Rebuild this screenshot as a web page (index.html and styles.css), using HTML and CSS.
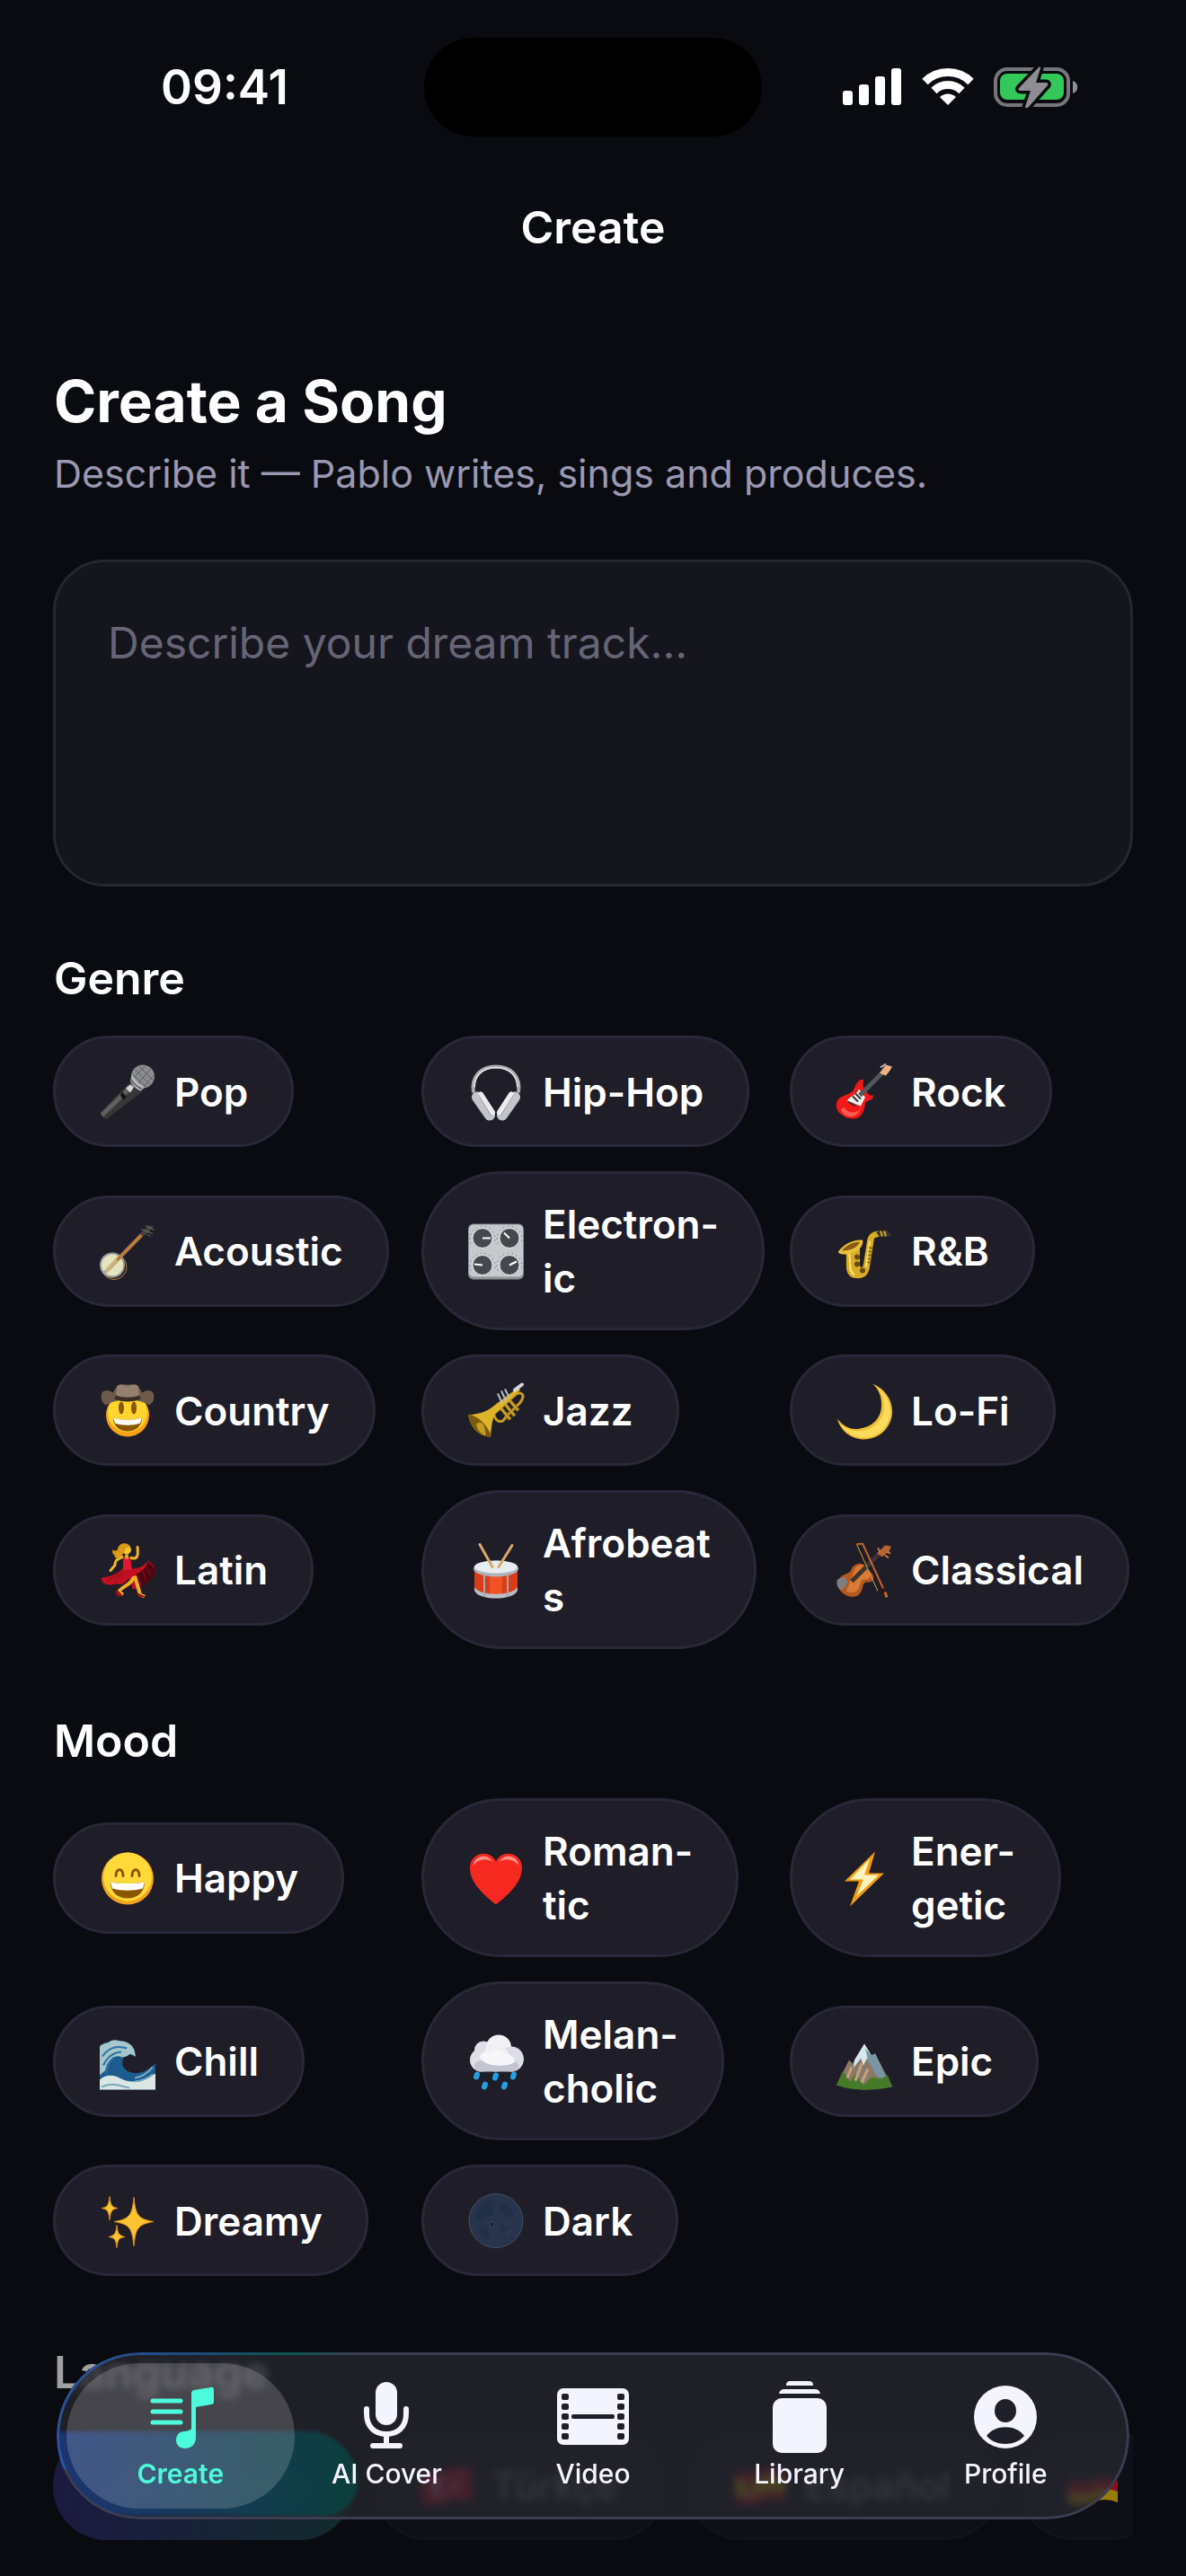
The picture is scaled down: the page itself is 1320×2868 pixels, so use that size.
FILE: index.html
```html
<!DOCTYPE html>
<html lang="en">

<head>
    <meta charset="UTF-8">
    <meta name="viewport" content="width=device-width, initial-scale=1">
    <title>Create</title>
    <link rel="stylesheet" href="styles.css">
</head>

<body>
    <div class="status">
        <span class="time">09:41</span>
        <div class="island"></div>
        <div class="status-icons">
            <svg width="66" height="44" viewBox="0 0 66 44" fill="#fff">
                <rect x="0" y="26" width="11" height="16" rx="3" />
                <rect x="18" y="19" width="11" height="23" rx="3" />
                <rect x="36" y="10" width="11" height="32" rx="3" />
                <rect x="54" y="1" width="11" height="41" rx="3" />
            </svg>
            <svg width="58" height="44" viewBox="0 0 58 44" fill="none" stroke="#fff" stroke-width="9">
                <path d="M3.500 16a36.500 36.500 0 0 1 51 0" />
                <path d="M13.500 26a22 22 0 0 1 31 0" />
                <path d="M29 42l-9-9a13 13 0 0 1 18 0z" fill="#fff" stroke="none" />
            </svg>
            <svg width="94" height="46" viewBox="0 0 94 46">
                <rect x="2" y="3" width="81" height="40" rx="13" fill="none" stroke="#77777b" stroke-width="4" />
                <path d="M88 16c7 2 7 12 0 14z" fill="#8e8e92" />
                <rect x="7" y="8" width="71" height="29" rx="8" fill="#34c759" />
                <path d="M50 1L28 24c-1 2 0 3 2 3h11l-6 18c0 2 2 2 3 1l22-25c1-2 0-3-2-3H47l5-16c0-2-1-2-2-1z" fill="#8e8e92" stroke="#0a0b10" stroke-width="7" paint-order="stroke" />
            </svg>
        </div>
    </div>

    <header class="title">Create</header>

    <main class="content">
        <h1>Create a Song</h1>
        <p class="sub">Describe it — Pablo writes, sings and produces.</p>
        <textarea class="prompt" aria-label="Song description" placeholder="Describe your dream track..."></textarea>

        <section>
            <h2>Genre</h2>
            <div class="grid">
                <button class="chip">
                    <svg viewBox="0 0 64 64">
                        <path d="M35 21l13 11L9 62c-3 1-8-4-7-7z" fill="#373737" />
                        <path d="M36 23l4 3L5 60l-3-4z" fill="#606060" />
                        <circle cx="49" cy="15" r="13" fill="#8b8d8f" />
                        <path d="M40 7l17 17M45 4l16 16M38 13l15 14M42 25L58 6M37 18L52 3M49 27l13-14" stroke="#5b5d60" stroke-width="1" />
                        <path d="M37 13c3 6 7 10 14 14l-4 4c-6-2-9-6-12-11z" fill="#b9bcc0" />
                        <path d="M36 18c2 5 6 8 12 11" fill="none" stroke="#66686b" stroke-width="2" />
                        <path d="M30 28l5-4 4 3-4 6z" fill="#d8d3d3" />
                        <path d="M26 32l5 6-4 3-3-5z" fill="#141414" />
                    </svg>
                    <span>Pop</span>
                </button>
                <button class="chip">
                    <svg viewBox="0 0 64 64">
                        <path d="M7 33C4 14 16 4 32 4s28 10 25 29" fill="none" stroke="#a9a9ab" stroke-width="4" />
                        <path d="M8 27C8 13 18 5 32 5s24 8 24 22" fill="none" stroke="#dedee0" stroke-width="2" />
                        <path d="M11 38l14 20M53 38L39 58" stroke="#c3c5ca" stroke-width="12" stroke-linecap="round" />
                        <path d="M15 35l13 20M49 35L36 55" stroke="#ececec" stroke-width="6" stroke-linecap="round" />
                        <path d="M12 35l15 24M52 35L37 59" stroke="#96999f" stroke-width="1" />
                    </svg>
                    <span>Hip-Hop</span>
                </button>
                <button class="chip">
                    <svg viewBox="0 0 64 64">
                        <path d="M24 22c3-5 8-4 7-1-2 5 2 9 6 14 2 3 6-1 5 2-1 6-8 4-9 8-1 8-4 17-13 17C8 62-1 53 1 45c1-7 8-8 14-11 6-2 6-8 9-12z" fill="#f31818" />
                        <path d="M9 49c5 8 16 8 19 0-1 13-19 14-22 3z" fill="#ff5a52" />
                        <path d="M26 29c3 4 4 6 7 9l-5 10-15-6c2-5 9-5 13-13z" fill="#eee" />
                        <path d="M19 37l6 6M22 34l6 6M14 43l8 5" stroke="#333" stroke-width="2" />
                        <path d="M27 36L52 11" stroke="#55565b" stroke-width="5" />
                        <path d="M49 11l7-9 7 2-3 5-4 5-3-1z" fill="#efb182" />
                        <path d="M50 5l6-4" stroke="#bbb" stroke-width="2" />
                    </svg>
                    <span>Rock</span>
                </button>
                <button class="chip">
                    <svg viewBox="0 0 64 64">
                        <circle cx="17" cy="49" r="14" fill="#2b221c" stroke="#b08442" stroke-width="1" />
                        <circle cx="15" cy="47" r="14" fill="#9c9ca4" />
                        <circle cx="15" cy="47" r="12" fill="#e3e5bf" />
                        <path d="M10 52L49 12" stroke="#b97c3e" stroke-width="4" />
                        <path d="M6 56l14-15" stroke="#c9b584" stroke-width="4" />
                        <path d="M46 12l9-9 6 1-7 8-6 3z" fill="#48423f" />
                        <path d="M47 7l13 5M52 3l10 5M54 13l4 2" stroke="#73706c" stroke-width="1" />
                        <circle cx="7" cy="55" r="2" fill="#a6acb5" />
                    </svg>
                    <span>Acoustic</span>
                </button>
                <button class="chip">
                    <svg viewBox="0 0 64 64">
                        <rect x="1" y="1" width="62" height="62" rx="6" fill="#8d9095" />
                        <rect x="2" y="2" width="60" height="58" rx="5" fill="#c6cacd" />
                        <g fill="#45494d" stroke="#eceeef" stroke-width="1">
                            <circle cx="17" cy="17" r="11" />
                            <circle cx="47" cy="17" r="11" />
                            <circle cx="17" cy="47" r="11" />
                            <circle cx="47" cy="47" r="11" />
                        </g>
                        <g fill="none" stroke="#55585c" stroke-width="1" stroke-dasharray="1 4">
                            <path d="M4 23a14 14 0 1 1 26 0M34 23a14 14 0 1 1 26 0M4 53a14 14 0 1 1 26 0M34 53a14 14 0 1 1 26 0" />
                        </g>
                        <path d="M17 17h9M47 17l-6-6M17 47l-9-1M47 47l8-4" stroke="#fff" stroke-width="2" />
                    </svg>
                    <span>Electron-<br>ic</span>
                </button>
                <button class="chip">
                    <svg viewBox="0 0 64 64">
                        <path d="M11 31c3 11-3 25 8 30 12 3 18-3 19-12l5-32 9-3-4-5c-8 0-12 5-13 11l-4 26c-1 5-4 5-4 0V22z" fill="#d9ad27" />
                        <path d="M15 34c2 8-1 20 6 24M38 20l-4 29" fill="none" stroke="#fbe577" stroke-width="2" />
                        <path d="M3 32c5-8 17-14 27-13 2 7-7 16-20 16-5 0-7-1-7-3z" fill="#e9c23c" />
                        <path d="M7 31c4-6 13-10 20-10-1 5-9 10-20 10z" fill="#8b5c10" />
                        <path d="M45 10l12-2 6 6-14 2z" fill="#3a372f" />
                        <path d="M50 9l2 6M54 9l2 6" stroke="#d9ad27" stroke-width="2" />
                        <g fill="#6b4a0b">
                            <circle cx="24" cy="38" r="3" />
                            <circle cx="24" cy="46" r="3" />
                            <circle cx="30" cy="53" r="3" />
                        </g>
                        <path d="M39 27l-2 20" stroke="#8b6a15" stroke-width="4" stroke-dasharray="2 2" />
                    </svg>
                    <span>R&amp;B</span>
                </button>
                <button class="chip">
                    <svg viewBox="0 0 64 64">
                        <circle cx="32" cy="37" r="24" fill="#f9a01b" />
                        <circle cx="32" cy="34" r="22" fill="#ffd52e" />
                        <path d="M3 13c3-5 8-4 13-1 3-8 8-9 11-9h10c3 0 8 1 11 9 5-3 10-4 13 1 1 6 0 10-5 13-12-8-36-8-48 0-5-3-6-7-5-13z" fill="#6e5a4b" />
                        <path d="M20 5c3-3 7-2 12 0 5-2 9-3 12 0l1 11c-8 3-18 3-26 0z" fill="#94806f" />
                        <path d="M19 15c8 3 18 3 26 0l2 4c-9 4-21 4-30 0z" fill="#3a2f27" />
                        <ellipse cx="25" cy="29" rx="3" ry="7" fill="#8a5700" />
                        <ellipse cx="39" cy="29" rx="3" ry="7" fill="#8a5700" />
                        <path d="M16 40c10 3 22 3 32 0 0 9-7 15-16 15s-16-6-16-15z" fill="#8a5700" />
                        <path d="M16 40c10 3 22 3 32 0l-2 6c-9 3-19 3-28 0z" fill="#fff" />
                    </svg>
                    <span>Country</span>
                </button>
                <button class="chip">
                    <svg viewBox="0 0 64 64">
                        <path d="M30 37c2 8 9 10 13 2l16-16c6-8 2-12-4-10L31 34" fill="none" stroke="#c79d1d" stroke-width="3" />
                        <path d="M34 25l14 17M39 21l14 17M44 17l13 15" stroke="#a87e14" stroke-width="4" />
                        <path d="M33 24l14 17M38 20l14 17M43 16l13 15" stroke="#f1d24b" stroke-width="1" />
                        <path d="M1 37c9-1 20-3 27-9L57 6l2 3-27 26c-5 7-5 17-6 26C14 61 4 52 1 37z" fill="#dcb329" />
                        <path d="M1 36c11 2 22 12 26 25C14 62 3 51 1 36z" fill="#7a5a10" />
                        <path d="M10 47c4-3 8-2 9 3 1 4 2 8 1 10-5-2-9-7-10-13z" fill="#c79d1d" />
                        <path d="M34 13l5 11M38 10l5 11M42 8l5 10" stroke="#b9bcc7" stroke-width="2" />
                        <path d="M53 9l8-6" stroke="#d4d7e0" stroke-width="4" stroke-linecap="round" />
                    </svg>
                    <span>Jazz</span>
                </button>
                <button class="chip">
                    <svg viewBox="0 0 64 64">
                        <path d="M41 2c13 5 22 17 22 31 0 17-14 31-31 31C17 64 5 54 2 41c7 9 15 13 25 11 15-2 25-13 24-28 0-9-4-17-10-22z" fill="#f0c033" />
                        <path d="M45 6c10 6 16 16 16 27 0 15-13 29-29 29-11 0-21-6-27-15 8 7 18 9 27 7 15-3 24-17 22-31-1-7-4-13-9-17z" fill="#fbdb5b" />
                    </svg>
                    <span>Lo-Fi</span>
                </button>
                <button class="chip">
                    <svg viewBox="0 0 64 64">
                        <path d="M26 30h11c5 0 13-2 18-9 4 3 7 7 8 10-1 5-3 10-9 14-5 4-10 7-16 8l-4-12c-5 4-7 8-13 6-6 1-13 2-17-2-1-3-2-3-1-5 8-1 17-3 23-10z" fill="#c20f22" />
                        <path d="M41 36c6-2 11-6 14-14l8 9c-1 8-8 16-20 22-3-6 2-11-2-17z" fill="#4d060f" />
                        <path d="M27 33l-9 12M24 35L9 44M49 32l4 12M53 28l5 10M44 36l2 14" stroke="#86101c" stroke-width="1" />
                        <path d="M39 39c-2 9-13 10-17 17l5 3M40 38l6 21 5 2" fill="none" stroke="#efae22" stroke-width="4" />
                        <path d="M18 56l3-2 6 6-6 1zM43 57l9 4-1 1-7-1z" fill="#9c1218" />
                        <path d="M27 17h8l2 14H27z" fill="#dd1830" />
                        <path d="M26 17c-8 3-8 6-8 9l-5 6M36 18c7 2 8-2 7-12" fill="none" stroke="#f2b429" stroke-width="3" stroke-linecap="round" />
                        <path d="M29 14h4v5h-4z" fill="#e9a21c" />
                        <circle cx="31" cy="9" r="5" fill="#f7c331" />
                        <path d="M35 5C30-1 22 2 21 8c-1 3-4 2-6 1 0 4 1 6 3 6-2 4 5 5 8 0 3-4 2-8 9-10z" fill="#dc9818" />
                    </svg>
                    <span>Latin</span>
                </button>
                <button class="chip">
                    <svg viewBox="0 0 64 64">
                        <path d="M8 30h48v22c-3 13-45 13-48 0z" fill="#d93c18" />
                        <path d="M25 35h14v26H25z" fill="#ee5326" />
                        <path d="M8 50c4 11 44 11 48 0v4c-3 12-45 12-48 0z" fill="#b9bec3" />
                        <path d="M19 36v25M45 36v25" stroke="#a3a6ab" stroke-width="2" />
                        <ellipse cx="32" cy="30" rx="25" ry="9" fill="#aeb4ba" />
                        <ellipse cx="32" cy="28" rx="24" ry="7" fill="#e5edf2" />
                        <path d="M14 3l14 25M50 4L35 28" stroke="#d9aa67" stroke-width="3" stroke-linecap="round" />
                    </svg>
                    <span>Afrobeat<br>s</span>
                </button>
                <button class="chip">
                    <svg viewBox="0 0 64 64">
                        <path d="M18 29c5-6 12-6 15-2l8 9c3 4 0 10-5 9-6-1-5 5-7 9-3 9-13 9-20 4-6-4-9-12-5-17 4-6 14-5 14-12z" fill="#b3581f" />
                        <path d="M22 29c4-4 9-4 11-1l5 8c1 4-1 6-5 6-6 0-5 5-7 9-2 6-9 7-14 4z" fill="#d97b37" />
                        <path d="M2 42l8-3 4 6-7 9c-4-2-7-6-5-12z" fill="#7d7f82" />
                        <path d="M18 44L50 12" stroke="#3d3331" stroke-width="5" />
                        <path d="M46 13l9-9 7 1-2 5-8 7z" fill="#b4642d" />
                        <path d="M47 7l3 5M55 15l4 3M57 11l4 2" stroke="#c77b42" stroke-width="2" />
                        <path d="M23 3l7-1 24 52" fill="none" stroke="#c5652c" stroke-width="2" />
                        <path d="M24 4l23 51" stroke="#d4a848" stroke-width="1" />
                        <path d="M46 56l8-5 2 6-6 1z" fill="#2a1714" />
                        <path d="M55 56l2 6" stroke="#c5652c" stroke-width="3" />
                    </svg>
                    <span>Classical</span>
                </button>
            </div>
        </section>

        <section>
            <h2>Mood</h2>
            <div class="grid">
                <button class="chip">
                    <svg viewBox="0 0 64 64">
                        <circle cx="32" cy="32" r="29" fill="#f5a31a" />
                        <circle cx="32" cy="30" r="27" fill="#ffd93a" />
                        <path d="M19 29c0-9 8-9 8 0M37 29c0-9 8-9 8 0" fill="none" stroke="#8a5700" stroke-width="3" stroke-linecap="round" />
                        <path d="M13 36c12 2 26 2 38 0 0 11-8 18-19 18s-19-7-19-18z" fill="#8a5700" />
                        <path d="M13 36c12 2 26 2 38 0l-2 7c-11 3-23 3-34 0z" fill="#fff" />
                    </svg>
                    <span>Happy</span>
                </button>
                <button class="chip">
                    <svg viewBox="0 0 64 64">
                        <path d="M32 61C17 49 3 36 3 20 3 2 26-1 32 13 38-1 61 2 61 20c0 16-14 29-29 41z" fill="#f5291f" />
                        <path d="M7 17C8 6 23 4 28 13c-8-4-15-3-21 4zM36 13C41 4 56 6 57 17c-6-7-13-8-21-4z" fill="#ff938a" />
                    </svg>
                    <span>Roman-<br>tic</span>
                </button>
                <button class="chip">
                    <svg viewBox="0 0 64 64">
                        <path d="M44 2L10 35h16l-10 28 38-37H37z" fill="#f49d13" />
                        <path d="M38 10L16 33h15l-8 19 25-24H32z" fill="#fff4bd" />
                    </svg>
                    <span>Ener-<br>getic</span>
                </button>
                <button class="chip">
                    <svg viewBox="0 0 64 64">
                        <path d="M1 14C10 8 24 6 33 12c8 5 9 11 7 15-5-5-11-3-13 2-4 9 6 18 18 15 8-1 11-5 18-10v29H1z" fill="#1e5b8e" />
                        <path d="M1 15c3-3 6-4 9-4 5-5 11-3 14-2 7-1 14 5 15 9l2 8-6-3-4 3-5 1c-8-4-15 3-16 12L1 47z" fill="#a6c6ce" />
                        <path d="M4 26c6-9 16-13 27-9M5 36c4-9 10-14 20-15M8 45c0-8 3-14 9-18" fill="none" stroke="#2f719f" stroke-width="2" />
                        <path d="M1 52c8-7 17-5 24-1 12 6 24 2 38-6v18H1z" fill="#dbe7e4" />
                        <path d="M3 60c13-6 19-1 31 1M40 54c8-1 14-3 20-8M40 50c8-1 14-5 20-12" fill="none" stroke="#78aabe" stroke-width="2" />
                    </svg>
                    <span>Chill</span>
                </button>
                <button class="chip">
                    <svg viewBox="0 0 64 64">
                        <circle cx="18" cy="19" r="10" fill="#dfe0e8" />
                        <circle cx="35" cy="16" r="14" fill="#f1f1f6" />
                        <circle cx="16" cy="30" r="13" fill="#dfdfe8" />
                        <circle cx="49" cy="29" r="14" fill="#dddde7" />
                        <circle cx="32" cy="28" r="15" fill="#f0f0f5" />
                        <rect x="8" y="31" width="49" height="12" rx="6" fill="#c4c4d0" />
                        <path d="M14 27c1-7 9-8 12-4 5-6 13-5 16 1 6-1 11 3 11 8-6 6-33 7-39-5z" fill="#f7f7fa" />
                        <path d="M11 46l-1 3M32 47l-1 3M52 46l-1 3M20 57l-1 3M42 57l-1 3" stroke="#23a1e4" stroke-width="6" stroke-linecap="round" />
                    </svg>
                    <span>Melan-<br>cholic</span>
                </button>
                <button class="chip">
                    <svg viewBox="0 0 64 64">
                        <path d="M1 58l14-28 4 4L32 12l8 13 4-2 19 36-32 4z" fill="#8b7969" />
                        <path d="M32 12l-11 18-1 9 8-11 3 8 4-8 10 15 6-4-7-16-4 2z" fill="#d8e7ee" />
                        <path d="M33 17l3 13 10 18 11 4-13-29-4 2z" fill="#7896a4" />
                        <path d="M1 58l7-16 8 12 6-8 9 12 9-9 10 2 8-4 5 13c-24 5-46 4-62-2z" fill="#477a28" />
                        <path d="M13 50l5-12M22 53l7-19M29 55l7-15" stroke="#c4a17f" stroke-width="3" />
                    </svg>
                    <span>Epic</span>
                </button>
                <button class="chip">
                    <svg viewBox="0 0 64 64" fill="#fbc531" stroke="#e08e1a" stroke-width="1">
                        <path d="M39 6c2 19 4 24 22 27-18 3-20 8-22 27-2-19-4-24-22-27 18-3 20-8 22-27z" />
                        <path d="M12 5c1 9 2 12 9 13-7 1-8 4-9 13-1-9-2-12-9-13 7-1 8-4 9-13z" />
                        <path d="M20 37c1 9 2 11 9 13-7 1-8 3-9 12-1-9-2-11-9-12 7-2 8-4 9-13z" />
                    </svg>
                    <span>Dreamy</span>
                </button>
                <button class="chip">
                    <svg viewBox="0 0 64 64">
                        <circle cx="32" cy="32" r="30" fill="#27344c" stroke="#46505c" stroke-width="1" />
                        <path d="M21 10c8-4 13 1 10 7-4 5-1 9-7 10-7 1-9 8-13 5C9 25 12 15 21 10zM36 12c8-1 14 7 15 14-3 5-9 2-11-4-4-1-7-8-4-10zM14 39c7-2 10 2 9 7 4 3 1 8-4 7-5-3-8-9-5-14zM35 37c6-2 10 1 8 6-4 3-9 0-8-6z" fill="#223047" />
                        <path d="M27 34c3-2 3 4 0 6M45 47l6-6" stroke="#2f3d57" stroke-width="2" />
                    </svg>
                    <span>Dark</span>
                </button>
            </div>
        </section>

        <section class="language">
            <h2>Language</h2>
            <div class="languages">
                <button class="lang selected">
                    <svg viewBox="0 0 56 44">
                        <path d="M0 4q14 6 28 0t28 0v36q-14-6-28 0T0 40z" fill="#d33" />
                        <path d="M0 12q14 6 28 0t28 0M0 22q14 6 28 0t28 0M0 32q14 6 28 0t28 0" fill="none" stroke="#eee" stroke-width="3" />
                        <path d="M0 4q14 6 26 0v19q-12 5-26 0z" fill="#249" />
                    </svg>
                    <span>English</span>
                </button>
                <button class="lang">
                    <svg viewBox="0 0 56 44">
                        <path d="M0 4q14 6 28 0t28 0v36q-14-6-28 0T0 40z" fill="#e2122c" />
                        <circle cx="22" cy="22" r="10" fill="#fff" />
                        <circle cx="25" cy="22" r="8" fill="#e2122c" />
                        <circle cx="37" cy="22" r="3" fill="#fff" />
                    </svg>
                    <span>Türkçe</span>
                </button>
                <button class="lang">
                    <svg viewBox="0 0 56 44">
                        <path d="M0 4q14 6 28 0t28 0v36q-14-6-28 0T0 40z" fill="#d4141e" />
                        <path d="M0 13q14 6 28 0t28 0v18q-14-6-28 0T0 31z" fill="#f7c600" />
                        <rect x="13" y="16" width="8" height="12" fill="#b5402a" />
                    </svg>
                    <span>Español</span>
                </button>
                <button class="lang" aria-label="Deutsch">
                    <svg viewBox="0 0 56 44">
                        <path d="M0 4q14 6 28 0t28 0v36q-14-6-28 0T0 40z" fill="#1b1b1b" />
                        <path d="M0 16q14 6 28 0t28 0v12q-14-6-28 0T0 28z" fill="#e01020" />
                        <path d="M0 28q14 6 28 0t28 0v12q-14-6-28 0T0 40z" fill="#f3c400" />
                    </svg>
                </button>
            </div>
        </section>
    </main>

    <nav class="tabs">
        <div class="glow"></div>
        <a class="tab active" href="#create">
            <svg viewBox="0 0 84 84" fill="#4dfadb">
                <path d="M11 25h31M11 37h31M11 49h31" stroke="#4dfadb" stroke-width="5" stroke-linecap="round" />
                <path d="M57 13l18-3c3-1 4 0 4 3v13c0 2-1 3-3 3l-17 3v34c0 7-5 12-12 12-6 0-10-4-10-9 0-6 4-10 9-10 5-1 8-1 8-4V17c0-2 1-4 3-4z" />
            </svg>
            <span>Create</span>
        </a>
        <a class="tab" href="#cover">
            <svg viewBox="0 0 84 84" fill="#f4f4ff">
                <rect x="30" y="4" width="24" height="48" rx="12" />
                <path d="M20 34v5c0 15 9 23 22 23s22-8 22-23v-5M42 62v11M27 75h30" fill="none" stroke="#f4f4ff" stroke-width="6" stroke-linecap="round" />
            </svg>
            <span>AI Cover</span>
        </a>
        <a class="tab" href="#video">
            <svg viewBox="0 0 84 84" fill="#f4f4ff">
                <rect x="2" y="11" width="80" height="63" rx="7" />
                <g fill="#1f1f29">
                    <rect x="7" y="17" width="8" height="7" rx="2" />
                    <rect x="7" y="28" width="8" height="7" rx="2" />
                    <rect x="7" y="39" width="8" height="7" rx="2" />
                    <rect x="7" y="50" width="8" height="7" rx="2" />
                    <rect x="7" y="61" width="8" height="7" rx="2" />
                    <rect x="69" y="17" width="8" height="7" rx="2" />
                    <rect x="69" y="28" width="8" height="7" rx="2" />
                    <rect x="69" y="39" width="8" height="7" rx="2" />
                    <rect x="69" y="50" width="8" height="7" rx="2" />
                    <rect x="69" y="61" width="8" height="7" rx="2" />
                    <rect x="18" y="40" width="48" height="5" rx="2" />
                </g>
            </svg>
            <span>Video</span>
        </a>
        <a class="tab" href="#library">
            <svg viewBox="0 0 84 84" fill="#f4f4ff">
                <path d="M27 8c0-4 2-5 5-5h20c3 0 5 1 5 5zM19 17c1-4 3-5 7-5h32c4 0 6 1 7 5z" />
                <rect x="12" y="22" width="60" height="61" rx="10" />
            </svg>
            <span>Library</span>
        </a>
        <a class="tab" href="#profile">
            <svg viewBox="0 0 84 84" fill="#f4f4ff">
                <circle cx="42" cy="43" r="35" />
                <ellipse cx="42" cy="36" rx="12" ry="13" fill="#1f1f29" />
                <path d="M21 64c9-13 33-13 42 0-10 12-32 12-42 0z" fill="#1f1f29" />
            </svg>
            <span>Profile</span>
        </a>
    </nav>
</body>

</html>
```
FILE: styles.css
```css
* {
    box-sizing: border-box;
}

body,
h1,
h2,
p {
    margin: 0;
}

body {
    min-height: 100vh;
    background: #0a0b10;
    color: #fff;
    font-family: Inter, "Liberation Sans", sans-serif;
}

button,
textarea {
    font-family: inherit;
}

/* status bar */
.status {
    display: grid;
    grid-template-columns: 1fr 376px 1fr;
    align-items: center;
    height: 194px;
}

.time {
    padding-left: 28px;
    text-align: center;
    font-size: 53px;
    font-weight: 600;
}

.island {
    height: 110px;
    border-radius: 55px;
    background: #000;
}

.status-icons {
    display: flex;
    align-items: center;
    justify-content: flex-end;
    gap: 22px;
    padding-right: 120px;
}

.title {
    height: 118px;
    line-height: 118px;
    text-align: center;
    font-size: 50px;
    font-weight: 600;
}

/* content */
.content {
    padding: 95px 59px 0;
}

h1 {
    font-size: 64px;
    line-height: 80px;
    font-weight: 700;
}

.sub {
    margin-top: 10px;
    color: #9a98b2;
    font-size: 43px;
    line-height: 60px;
}

.prompt {
    display: block;
    width: 100%;
    height: 364px;
    margin-top: 66px;
    padding: 60px 58px;
    background: #15151e;
    border: 3px solid #262633;
    border-radius: 58px;
    color: #fff;
    font-size: 48px;
    line-height: 60px;
    resize: none;
    outline: none;
}

.prompt::placeholder {
    color: #676575;
    opacity: 1;
}

h2 {
    margin: 72px 0 34px;
    font-size: 50px;
    line-height: 60px;
    font-weight: 600;
}

h1,
h2,
.sub {
    padding-left: 1px;
}

.grid {
    display: grid;
    grid-template-columns: repeat(3, 1fr);
    gap: 27px 28px;
    align-items: center;
    justify-items: start;
}

.chip {
    display: flex;
    align-items: center;
    gap: 20px;
    padding: 26px 48px 25px;
    background: #1e1d28;
    border: 3px solid #2a2838;
    border-radius: 90px;
    color: #fff;
    font-size: 44px;
    line-height: 60px;
    font-weight: 600;
    text-align: left;
    white-space: nowrap;
}

.chip svg {
    flex: none;
    width: 64px;
    height: 67px;
}

/* languages, half hidden behind the tab bar */
.language h2 {
    margin: 77px 0 36px;
    color: #a0a0a3;
}

.languages {
    display: flex;
    gap: 22px;
    overflow: hidden;
}

.lang {
    display: flex;
    flex: none;
    align-items: center;
    gap: 22px;
    height: 121px;
    padding: 0 51px;
    background: #0f0f17;
    border: 3px solid #12131a;
    border-radius: 60px;
    color: #55555b;
    font-size: 42px;
    font-weight: 600;
}

.lang svg {
    width: 56px;
    height: 44px;
    opacity: .6;
}

.lang.selected {
    background: linear-gradient(90deg, #1c1a42, #132a2c);
    border-color: transparent;
    background-origin: border-box;
}

/* tab bar */
.tabs {
    position: fixed;
    left: 63px;
    right: 63px;
    bottom: 63px;
    display: grid;
    grid-template-columns: repeat(5, 1fr);
    padding: 29px 23px 33px;
    border-radius: 93px;
    background: rgba(40, 40, 49, .72);
    backdrop-filter: blur(4px);
    overflow: hidden;
}

/* glass rim, only the ring of the gradients is kept */
.tabs::after {
    content: "";
    position: absolute;
    inset: 0;
    padding: 3px;
    border-radius: 93px;
    background: linear-gradient(90deg, #2c54a0, #1f4a80 12%, #0c544c 22%, rgba(12, 84, 76, 0) 28%) top / 100% 70% no-repeat, #3d3c50;
    mask: linear-gradient(#000 0 0) content-box exclude, linear-gradient(#000 0 0);
    pointer-events: none;
}

/* colour of the selected language spilling through the glass */
.glow {
    position: absolute;
    left: 0;
    top: 88px;
    bottom: 4px;
    width: 335px;
    border-radius: 0 60px 40px 0;
    background: linear-gradient(90deg, #1d3878, #0c433f);
    opacity: .92;
    filter: blur(2px);
}

.tab {
    position: relative;
    display: flex;
    flex-direction: column;
    align-items: center;
    gap: 4px;
    color: #f4f4ff;
    font-size: 30px;
    line-height: 36px;
    font-weight: 500;
    text-decoration: none;
}

.tab svg {
    width: 84px;
    height: 84px;
}

.tab svg,
.tab span {
    position: relative;
}

.active {
    color: #4dfadb;
    font-weight: 600;
}

.active::before {
    content: "";
    position: absolute;
    inset: -17px -12px -21px;
    border-radius: 81px;
    background: rgba(255, 255, 255, .17);
}
```
